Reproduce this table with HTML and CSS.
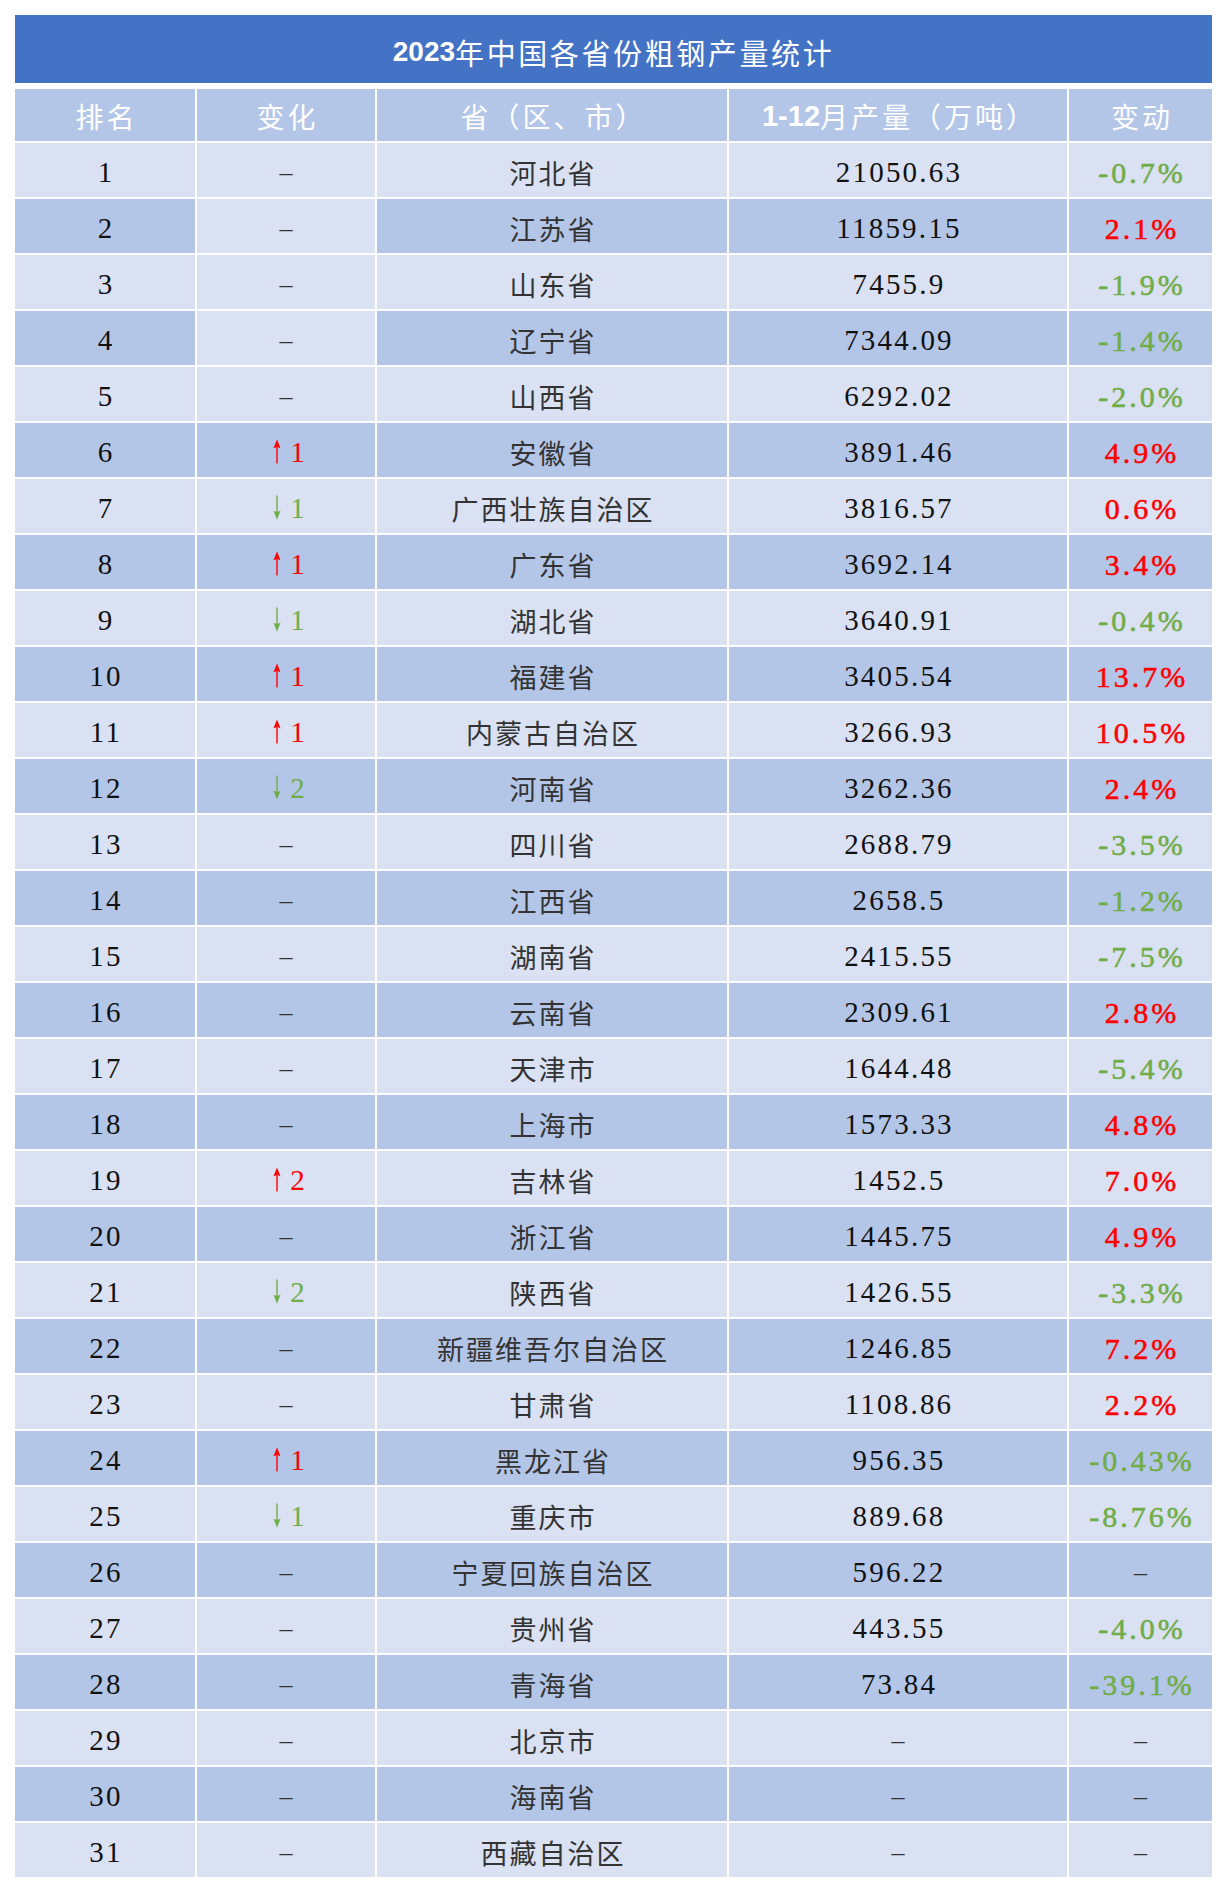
FILE: index.html
```html
<!DOCTYPE html>
<html lang="zh-CN">
<head>
<meta charset="utf-8">
<title>2023年中国各省份粗钢产量统计</title>
<link rel="stylesheet" href="styles.css">
</head>
<body>
<div class="page">
  <div class="title"><b class="lat">2023</b><span class="cjk">年中国各省份粗钢产量统计</span></div>
  <div class="table">
    <div class="row head">
      <div class="cell">排名</div>
      <div class="cell">变化</div>
      <div class="cell">省（区、市）</div>
      <div class="cell"><b class="lat">1-12</b>月产量（万吨）</div>
      <div class="cell">变动</div>
    </div>
    <div class="row odd"><div class="cell num">1</div><div class="cell"><span class="dash">–</span></div><div class="cell prov">河北省</div><div class="cell num">21050.63</div><div class="cell pct down">-0.7%</div></div>
    <div class="row even"><div class="cell num">2</div><div class="cell light"><span class="dash">–</span></div><div class="cell prov">江苏省</div><div class="cell num">11859.15</div><div class="cell pct up">2.1%</div></div>
    <div class="row odd"><div class="cell num">3</div><div class="cell"><span class="dash">–</span></div><div class="cell prov">山东省</div><div class="cell num">7455.9</div><div class="cell pct down">-1.9%</div></div>
    <div class="row even"><div class="cell num">4</div><div class="cell light"><span class="dash">–</span></div><div class="cell prov">辽宁省</div><div class="cell num">7344.09</div><div class="cell pct down">-1.4%</div></div>
    <div class="row odd"><div class="cell num">5</div><div class="cell"><span class="dash">–</span></div><div class="cell prov">山西省</div><div class="cell num">6292.02</div><div class="cell pct down">-2.0%</div></div>
    <div class="row even"><div class="cell num">6</div><div class="cell"><span class="chg up"><svg class="arrow" viewBox="0 0 8 24"><path d="M4 0 L7.6 9 L4.7 7.6 L4.7 24 L3.3 24 L3.3 7.6 L0.4 9 Z"/></svg>1</span></div><div class="cell prov">安徽省</div><div class="cell num">3891.46</div><div class="cell pct up">4.9%</div></div>
    <div class="row odd"><div class="cell num">7</div><div class="cell"><span class="chg down"><svg class="arrow" viewBox="0 0 8 24"><path d="M4 24 L7.6 15 L4.7 16.4 L4.7 0 L3.3 0 L3.3 16.4 L0.4 15 Z"/></svg>1</span></div><div class="cell prov">广西壮族自治区</div><div class="cell num">3816.57</div><div class="cell pct up">0.6%</div></div>
    <div class="row even"><div class="cell num">8</div><div class="cell"><span class="chg up"><svg class="arrow" viewBox="0 0 8 24"><path d="M4 0 L7.6 9 L4.7 7.6 L4.7 24 L3.3 24 L3.3 7.6 L0.4 9 Z"/></svg>1</span></div><div class="cell prov">广东省</div><div class="cell num">3692.14</div><div class="cell pct up">3.4%</div></div>
    <div class="row odd"><div class="cell num">9</div><div class="cell"><span class="chg down"><svg class="arrow" viewBox="0 0 8 24"><path d="M4 24 L7.6 15 L4.7 16.4 L4.7 0 L3.3 0 L3.3 16.4 L0.4 15 Z"/></svg>1</span></div><div class="cell prov">湖北省</div><div class="cell num">3640.91</div><div class="cell pct down">-0.4%</div></div>
    <div class="row even"><div class="cell num">10</div><div class="cell"><span class="chg up"><svg class="arrow" viewBox="0 0 8 24"><path d="M4 0 L7.6 9 L4.7 7.6 L4.7 24 L3.3 24 L3.3 7.6 L0.4 9 Z"/></svg>1</span></div><div class="cell prov">福建省</div><div class="cell num">3405.54</div><div class="cell pct up">13.7%</div></div>
    <div class="row odd"><div class="cell num">11</div><div class="cell"><span class="chg up"><svg class="arrow" viewBox="0 0 8 24"><path d="M4 0 L7.6 9 L4.7 7.6 L4.7 24 L3.3 24 L3.3 7.6 L0.4 9 Z"/></svg>1</span></div><div class="cell prov">内蒙古自治区</div><div class="cell num">3266.93</div><div class="cell pct up">10.5%</div></div>
    <div class="row even"><div class="cell num">12</div><div class="cell"><span class="chg down"><svg class="arrow" viewBox="0 0 8 24"><path d="M4 24 L7.6 15 L4.7 16.4 L4.7 0 L3.3 0 L3.3 16.4 L0.4 15 Z"/></svg>2</span></div><div class="cell prov">河南省</div><div class="cell num">3262.36</div><div class="cell pct up">2.4%</div></div>
    <div class="row odd"><div class="cell num">13</div><div class="cell"><span class="dash">–</span></div><div class="cell prov">四川省</div><div class="cell num">2688.79</div><div class="cell pct down">-3.5%</div></div>
    <div class="row even"><div class="cell num">14</div><div class="cell"><span class="dash">–</span></div><div class="cell prov">江西省</div><div class="cell num">2658.5</div><div class="cell pct down">-1.2%</div></div>
    <div class="row odd"><div class="cell num">15</div><div class="cell"><span class="dash">–</span></div><div class="cell prov">湖南省</div><div class="cell num">2415.55</div><div class="cell pct down">-7.5%</div></div>
    <div class="row even"><div class="cell num">16</div><div class="cell"><span class="dash">–</span></div><div class="cell prov">云南省</div><div class="cell num">2309.61</div><div class="cell pct up">2.8%</div></div>
    <div class="row odd"><div class="cell num">17</div><div class="cell"><span class="dash">–</span></div><div class="cell prov">天津市</div><div class="cell num">1644.48</div><div class="cell pct down">-5.4%</div></div>
    <div class="row even"><div class="cell num">18</div><div class="cell"><span class="dash">–</span></div><div class="cell prov">上海市</div><div class="cell num">1573.33</div><div class="cell pct up">4.8%</div></div>
    <div class="row odd"><div class="cell num">19</div><div class="cell"><span class="chg up"><svg class="arrow" viewBox="0 0 8 24"><path d="M4 0 L7.6 9 L4.7 7.6 L4.7 24 L3.3 24 L3.3 7.6 L0.4 9 Z"/></svg>2</span></div><div class="cell prov">吉林省</div><div class="cell num">1452.5</div><div class="cell pct up">7.0%</div></div>
    <div class="row even"><div class="cell num">20</div><div class="cell"><span class="dash">–</span></div><div class="cell prov">浙江省</div><div class="cell num">1445.75</div><div class="cell pct up">4.9%</div></div>
    <div class="row odd"><div class="cell num">21</div><div class="cell"><span class="chg down"><svg class="arrow" viewBox="0 0 8 24"><path d="M4 24 L7.6 15 L4.7 16.4 L4.7 0 L3.3 0 L3.3 16.4 L0.4 15 Z"/></svg>2</span></div><div class="cell prov">陕西省</div><div class="cell num">1426.55</div><div class="cell pct down">-3.3%</div></div>
    <div class="row even"><div class="cell num">22</div><div class="cell"><span class="dash">–</span></div><div class="cell prov">新疆维吾尔自治区</div><div class="cell num">1246.85</div><div class="cell pct up">7.2%</div></div>
    <div class="row odd"><div class="cell num">23</div><div class="cell"><span class="dash">–</span></div><div class="cell prov">甘肃省</div><div class="cell num">1108.86</div><div class="cell pct up">2.2%</div></div>
    <div class="row even"><div class="cell num">24</div><div class="cell"><span class="chg up"><svg class="arrow" viewBox="0 0 8 24"><path d="M4 0 L7.6 9 L4.7 7.6 L4.7 24 L3.3 24 L3.3 7.6 L0.4 9 Z"/></svg>1</span></div><div class="cell prov">黑龙江省</div><div class="cell num">956.35</div><div class="cell pct down">-0.43%</div></div>
    <div class="row odd"><div class="cell num">25</div><div class="cell"><span class="chg down"><svg class="arrow" viewBox="0 0 8 24"><path d="M4 24 L7.6 15 L4.7 16.4 L4.7 0 L3.3 0 L3.3 16.4 L0.4 15 Z"/></svg>1</span></div><div class="cell prov">重庆市</div><div class="cell num">889.68</div><div class="cell pct down">-8.76%</div></div>
    <div class="row even"><div class="cell num">26</div><div class="cell"><span class="dash">–</span></div><div class="cell prov">宁夏回族自治区</div><div class="cell num">596.22</div><div class="cell"><span class="dash">–</span></div></div>
    <div class="row odd"><div class="cell num">27</div><div class="cell"><span class="dash">–</span></div><div class="cell prov">贵州省</div><div class="cell num">443.55</div><div class="cell pct down">-4.0%</div></div>
    <div class="row even"><div class="cell num">28</div><div class="cell"><span class="dash">–</span></div><div class="cell prov">青海省</div><div class="cell num">73.84</div><div class="cell pct down">-39.1%</div></div>
    <div class="row odd"><div class="cell num">29</div><div class="cell"><span class="dash">–</span></div><div class="cell prov">北京市</div><div class="cell"><span class="dash">–</span></div><div class="cell"><span class="dash">–</span></div></div>
    <div class="row even"><div class="cell num">30</div><div class="cell"><span class="dash">–</span></div><div class="cell prov">海南省</div><div class="cell"><span class="dash">–</span></div><div class="cell"><span class="dash">–</span></div></div>
    <div class="row odd"><div class="cell num">31</div><div class="cell"><span class="dash">–</span></div><div class="cell prov">西藏自治区</div><div class="cell"><span class="dash">–</span></div><div class="cell"><span class="dash">–</span></div></div>
  </div>
</div>
</body>
</html>
```

FILE: styles.css
```css
html, body {
  margin: 0;
  padding: 0;
  background: #ffffff;
}

body {
  font-family: "Liberation Serif", "Noto Sans CJK SC", serif;
  color: #111111;
  text-spacing-trim: space-all;
}

.page {
  width: 1197px;
  padding: 15px 16px 17px 15px;
}

.title {
  height: 68px;
  margin-bottom: 6px;
  background: #4472c4;
  color: #ffffff;
  display: flex;
  align-items: center;
  justify-content: center;
  padding-top: 6px;
  box-sizing: border-box;
  font-size: 28px;
  font-family: "Liberation Sans", "Noto Sans CJK SC", sans-serif;
}

.title .cjk {
  font-family: "Noto Sans CJK SC", sans-serif;
  font-size: 29px;
  font-weight: 400;
  letter-spacing: 2.6px;
}

.lat {
  font-family: "Liberation Sans", Arial, sans-serif;
  font-weight: 700;
  letter-spacing: 0;
}

.table {
  display: flex;
  flex-direction: column;
  gap: 2px;
}

.row {
  display: grid;
  grid-template-columns: 180px 178px 350px 338px 143px;
  column-gap: 2px;
}

.cell {
  height: 54px;
  display: flex;
  align-items: center;
  justify-content: center;
  box-sizing: border-box;
  padding-top: 5px;
  white-space: nowrap;
}

.row.odd > .cell,
.row > .cell.light {
  background: #d9e1f2;
}

.row.even > .cell:not(.light),
.row.head > .cell {
  background: #b4c6e7;
}

.row.head > .cell {
  height: 52px;
  padding-top: 2px;
  padding-left: 3px;
  color: #ffffff;
  font-family: "Noto Sans CJK SC", sans-serif;
  font-size: 28px;
  letter-spacing: 3px;
}

.row.head .lat {
  letter-spacing: 0;
  font-size: 29px;
}

.num {
  font-size: 29px;
  letter-spacing: 2.2px;
  padding-left: 2px;
  color: #111111;
}

.prov {
  font-family: "Noto Sans CJK SC", sans-serif;
  font-size: 27px;
  letter-spacing: 2px;
  padding-left: 2px;
  color: #333333;
}

.pct {
  font-size: 30px;
  font-weight: 400;
  letter-spacing: 3px;
  padding-left: 3px;
  -webkit-text-stroke: 0.5px currentColor;
}

.pct.up {
  color: #ff0000;
}

.pct.down {
  color: #70ad47;
}

.dash {
  font-family: "Liberation Serif", serif;
  font-size: 26px;
  color: #333333;
}

.chg {
  display: inline-flex;
  align-items: center;
  font-size: 29px;
  padding-left: 6px;
}

.chg.up {
  color: #ff0000;
  fill: #ff0000;
}

.chg.down {
  color: #70ad47;
  fill: #70ad47;
}

.arrow {
  width: 8px;
  height: 25px;
  margin-right: 9px;
  margin-top: -3px;
}
```
